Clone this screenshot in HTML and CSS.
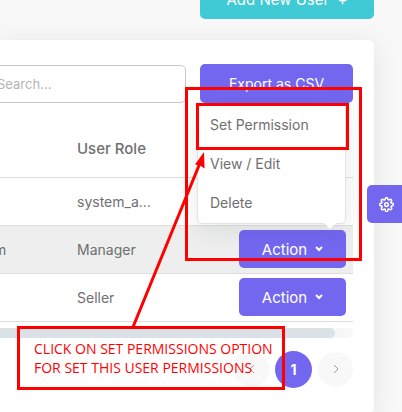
FILE: index.html
```html
<!DOCTYPE html>
<html lang="en">
<head>
<meta charset="utf-8">
<meta name="viewport" content="width=device-width, initial-scale=1">
<title>Users</title>
<link rel="stylesheet" href="styles.css">
</head>
<body>
<main class="page">
  <header class="page-head">
    <button class="btn btn-info" type="button">Add New User &nbsp;+</button>
  </header>

  <section class="card">
    <div class="toolbar">
      <input class="search" type="text" placeholder="Search..." aria-label="Search">
      <button class="btn btn-export" type="button">Export as CSV</button>
    </div>

    <table class="users">
      <thead>
        <tr><th class="col-mail"></th><th>User Role</th><th class="col-action"></th></tr>
      </thead>
      <tbody>
        <tr><td></td><td>system_a...</td><td></td></tr>
        <tr class="selected">
          <td class="mail">m</td>
          <td>Manager</td>
          <td class="action-cell">
            <div class="dropdown">
              <button class="btn btn-action" type="button">Action
                <svg class="chevron" viewBox="0 0 8 6" aria-hidden="true"><path d="M1 1l3 3 3-3"/></svg>
              </button>
              <div class="menu">
                <a href="#permission">Set Permission</a>
                <a href="#edit">View / Edit</a>
                <a href="#delete">Delete</a>
              </div>
            </div>
          </td>
        </tr>
        <tr>
          <td></td>
          <td>Seller</td>
          <td class="action-cell">
            <button class="btn btn-action" type="button">Action
              <svg class="chevron" viewBox="0 0 8 6" aria-hidden="true"><path d="M1 1l3 3 3-3"/></svg>
            </button>
          </td>
        </tr>
      </tbody>
    </table>

    <div class="scroll-track"><div class="scroll-thumb"></div></div>

    <nav class="pager" aria-label="Pages">
      <button class="page-btn" type="button" aria-label="Previous"><svg viewBox="0 0 6 10" aria-hidden="true"><path d="M5 1L1 5l4 4"/></svg></button>
      <button class="page-btn current" type="button">1</button>
      <button class="page-btn" type="button" aria-label="Next"><svg viewBox="0 0 6 10" aria-hidden="true"><path d="M1 1l4 4-4 4"/></svg></button>
    </nav>
  </section>

  <button class="customizer" type="button" aria-label="Settings">
    <svg viewBox="0 0 24 24" aria-hidden="true">
      <circle cx="12" cy="12" r="3"/>
      <path d="M19.400 15a1.650 1.650 0 0 0 .33 1.820l.06.06a2 2 0 1 1-2.830 2.830l-.06-.06a1.650 1.650 0 0 0-2.820 1.170V21a2 2 0 0 1-4 0v-.09a1.650 1.650 0 0 0-2.900-1.180l-.06.06a2 2 0 1 1-2.830-2.830l.06-.06A1.650 1.650 0 0 0 3.090 14H3a2 2 0 0 1 0-4h.09a1.650 1.650 0 0 0 1.180-2.900l-.06-.06a2 2 0 1 1 2.830-2.830l.06.06A1.650 1.650 0 0 0 10 3.090V3a2 2 0 0 1 4 0v.09a1.650 1.650 0 0 0 2.820 1.180l.06-.06a2 2 0 1 1 2.830 2.830l-.06.06A1.650 1.650 0 0 0 20.910 10H21a2 2 0 0 1 0 4h-.09a1.650 1.650 0 0 0-1.510 1z"/>
    </svg>
  </button>

  <div class="notes">
    <div class="mark mark-area"></div>
    <div class="mark mark-item"></div>
    <svg class="arrow" viewBox="0 0 402 412" aria-hidden="true">
      <path class="shaft" d="M133 327L200 163"/>
      <path class="head" d="M204 152l.6 16.500-4.600-3-5-1z"/>
    </svg>
    <p class="mark mark-text">CLICK ON SET PERMISSIONS OPTION<br>FOR SET THIS USER PERMISSIONS</p>
  </div>
</main>
</body>
</html>
```
FILE: styles.css
```css
* {
  box-sizing: border-box;
}

body {
  margin: 0;
  background: #f8f8f8;
  color: #6f6f6f;
  font-family: Inter, "Open Sans", sans-serif;
  font-size: 14px;
  overflow: hidden;
}

.page {
  position: relative;
  padding-right: 28px;
}

.page-head {
  display: flex;
  justify-content: flex-end;
  margin-top: -20px;
  padding-bottom: 21px;
}

.btn {
  height: 39px;
  padding: 0;
  border: 0;
  border-radius: 5px;
  background: #7367f0;
  color: #fff;
  font: inherit;
  font-size: 14px;
}

.btn-info {
  width: 174px;
  background: #3fcad6;
  font-size: 15px;
}

.card {
  padding: 24px 21px 25px 0;
  border-radius: 0 6px 6px 0;
  background: #fff;
  box-shadow: 0 4px 24px rgba(34, 41, 47, 0.1);
}

.toolbar {
  display: flex;
  align-items: center;
  gap: 14px;
}

.search {
  flex: 1;
  min-width: 0;
  height: 38px;
  margin-left: -16px;
  padding: 0 12px;
  border: 1px solid #c8c8c8;
  border-radius: 5px;
  background: #fff;
  color: #6f6f6f;
  font: inherit;
  font-size: 13px;
}

.search::placeholder {
  color: #b5b5b5;
  opacity: 1;
}

.btn-export {
  width: 153px;
}

.users {
  width: 100%;
  margin-top: 17px;
  border-collapse: collapse;
  table-layout: fixed;
}

.users th,
.users td {
  height: 48px;
  padding: 0;
  border-bottom: 1px solid #dedede;
  text-align: left;
}

.users th {
  height: 57px;
  font-size: 15px;
  font-weight: 500;
}

.users .col-mail {
  width: 77px;
}

.users .col-action {
  width: 154px;
}

.users .mail {
  text-indent: -6px;
}

.users .selected {
  background: #eee;
}

.users .action-cell {
  padding-right: 7px;
  text-align: right;
}

.dropdown {
  position: relative;
}

.btn-action {
  display: inline-flex;
  align-items: center;
  justify-content: center;
  gap: 8px;
  width: 107px;
  height: 38px;
  font-size: 15px;
  vertical-align: middle;
}

.chevron {
  width: 8px;
  height: 6px;
  fill: none;
  stroke: #fff;
  stroke-width: 2;
}

.menu {
  position: absolute;
  right: 0;
  bottom: 44px;
  width: 149px;
  padding: 1px 0;
  border: 1px solid #e4e4e4;
  border-radius: 5px;
  background: #fff;
  box-shadow: 0 5px 25px rgba(34, 41, 47, 0.1);
  text-align: left;
}

.menu::after {
  position: absolute;
  right: 9px;
  bottom: -6px;
  width: 12px;
  height: 6px;
  background: #fff;
  clip-path: polygon(0 0, 100% 0, 50% 100%);
  content: "";
}

.menu a {
  display: block;
  padding: 0 12px;
  color: #6f6f6f;
  font-size: 14px;
  line-height: 39px;
  text-decoration: none;
}

.scroll-track {
  height: 10px;
  margin-top: 6px;
  border-radius: 0 5px 5px 0;
  background: #f7f7f7;
}

.scroll-thumb {
  width: 95%;
  height: 10px;
  border-radius: 0 5px 5px 0;
  background: #dae1e7;
}

.pager {
  display: flex;
  align-items: center;
  justify-content: flex-end;
  gap: 6px;
  margin-top: 13px;
}

.page-btn {
  display: flex;
  align-items: center;
  justify-content: center;
  width: 35px;
  height: 35px;
  padding: 0;
  border: 0;
  border-radius: 50%;
  background: #f8f8f8;
  font: inherit;
}

.page-btn svg {
  width: 6px;
  height: 10px;
  fill: none;
  stroke: #999;
}

.page-btn.current {
  width: 37px;
  height: 37px;
  background: #7367f0;
  color: #fff;
  font-weight: 700;
}

.customizer {
  position: absolute;
  top: 205px;
  right: 0;
  display: flex;
  align-items: center;
  justify-content: center;
  width: 35px;
  height: 38px;
  padding: 0 0 0 3px;
  border: 0;
  border-radius: 5px 0 0 5px;
  background: #7367f0;
}

.customizer svg {
  width: 15px;
  height: 15px;
  fill: none;
  stroke: #fff;
  stroke-width: 2.400;
}

.notes {
  position: absolute;
  top: 20px;
  right: 0;
  width: 402px;
  height: 412px;
  pointer-events: none;
}

.mark {
  position: absolute;
  margin: 0;
  border: 3px solid #f00;
}

.mark-area {
  top: 87px;
  left: 185px;
  width: 177px;
  height: 174px;
}

.mark-item {
  top: 103px;
  left: 196px;
  width: 153px;
  height: 47px;
}

.mark-text {
  top: 326px;
  left: 17px;
  width: 268px;
  height: 64px;
  padding: 10px 14px;
  color: #f00;
  font-family: "Open Sans", sans-serif;
  font-size: 14px;
  line-height: 19px;
  white-space: nowrap;
}

.arrow {
  position: absolute;
  top: 0;
  left: 0;
  width: 402px;
  height: 412px;
}

.shaft {
  fill: none;
  stroke: #f00;
  stroke-width: 3;
}

.head {
  fill: #f00;
}
```
